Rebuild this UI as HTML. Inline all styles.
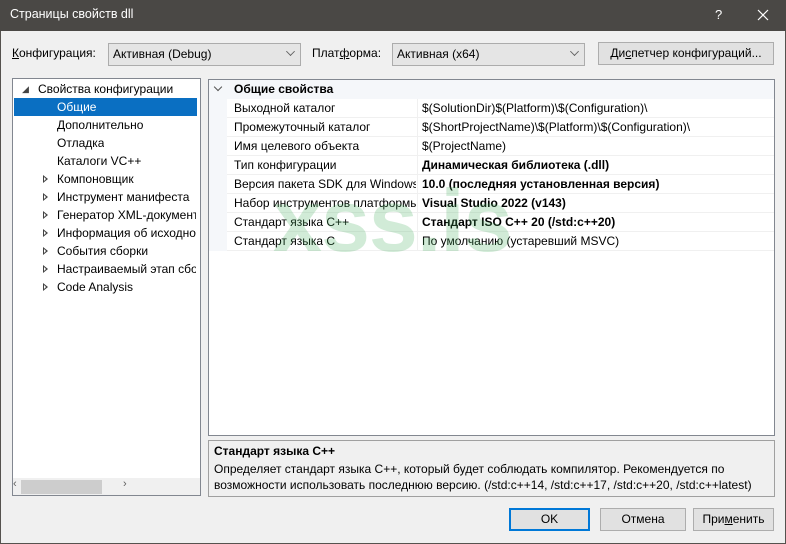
<!DOCTYPE html>
<html><head><meta charset="utf-8"><style>
*{margin:0;padding:0;box-sizing:border-box}
body{width:786px;height:544px;background:#f0f0f0;font-family:"Segoe UI","Liberation Sans","DejaVu Sans",sans-serif;font-size:12px;color:#000;position:relative;overflow:hidden}
.abs{position:absolute}
.win{position:absolute;left:0;top:0;width:786px;height:544px;border:1px solid #55524e;border-top:none}
.title{left:0;top:0;width:786px;height:31px;background:#4a4845;color:#fff;font-size:12.5px}
.combo{background:#e5e5e5;border:1px solid #acacac;height:23px;line-height:21px;padding-left:4px}
.btn{background:#e1e1e1;border:1px solid #adadad;height:23px;line-height:21px;text-align:center}
.chev{position:absolute;right:6px;width:7px;height:7px;border-right:1px solid #606060;border-bottom:1px solid #606060;transform:rotate(45deg) scale(.9);top:4px}
.tree{left:12px;top:78px;width:189px;height:418px;background:#fff;border:1px solid #828790}
.ti{position:absolute;height:18px;line-height:18px;white-space:nowrap;overflow:hidden}
.tri{position:absolute;width:0;height:0;border-top:4px solid transparent;border-bottom:4px solid transparent;border-left:5px solid #444}
.tri:after{content:"";position:absolute;left:-4px;top:-2px;border-top:2px solid transparent;border-bottom:2px solid transparent;border-left:2.5px solid #fff}
.grid{left:208px;top:79px;width:567px;height:357px;background:#fff;border:1px solid #828790}
.row{position:absolute;left:18px;width:547px;height:19px;line-height:18px;border-bottom:1px solid #f0f0f0}
.row .n{position:absolute;left:7px;width:182px;overflow:hidden;white-space:nowrap}
.row .v{position:absolute;left:190px;border-left:1px solid #f0f0f0;padding-left:4px;height:19px;width:357px;top:0;white-space:nowrap}
.b{font-weight:bold}
</style></head><body>
<div class="abs title"><span class="abs" style="left:10px;top:7px">Страницы свойств dll</span><span class="abs" style="left:715px;top:7px;font-size:13px">?</span>
<svg class="abs" style="left:757px;top:9px" width="12" height="12"><path d="M1 1L11 11M11 1L1 11" stroke="#fff" stroke-width="1.2"/></svg></div>
<div class="win" style="top:31px;height:513px"></div>

<span class="abs" style="left:12px;top:46px"><u>К</u>онфигурация:</span>
<div class="abs combo" style="left:108px;top:43px;width:193px">Активная (Debug)<span class="chev"></span></div>
<span class="abs" style="left:312px;top:46px">Плат<u>ф</u>орма:</span>
<div class="abs combo" style="left:392px;top:43px;width:193px">Активная (x64)<span class="chev"></span></div>
<div class="abs btn" style="left:598px;top:42px;width:176px">Ди<u>с</u>петчер конфигураций...</div>

<div class="abs tree">
 <div class="ti" style="left:9px;top:1px;font-size:9px;color:#444">◢</div>
 <div class="ti" style="left:25px;top:1px">Свойства конфигурации</div>
 <div class="ti" style="left:1px;top:19px;width:183px;background:#0a6fc2;color:#fff;padding-left:43px">Общие</div>
 <div class="ti" style="left:44px;top:37px">Дополнительно</div>
 <div class="ti" style="left:44px;top:55px">Отладка</div>
 <div class="ti" style="left:44px;top:73px">Каталоги VC++</div>
 <div class="ti" style="left:44px;top:91px;width:139px">Компоновщик</div>
 <div class="ti" style="left:44px;top:109px;width:139px">Инструмент манифеста</div>
 <div class="ti" style="left:44px;top:127px;width:139px">Генератор XML-документов</div>
 <div class="ti" style="left:44px;top:145px;width:139px">Информация об исходном коде</div>
 <div class="ti" style="left:44px;top:163px;width:139px">События сборки</div>
 <div class="ti" style="left:44px;top:181px;width:139px">Настраиваемый этап сборки</div>
 <div class="ti" style="left:44px;top:199px;width:139px">Code Analysis</div>
 <span class="tri" style="left:30px;top:96px"></span>
 <span class="tri" style="left:30px;top:114px"></span>
 <span class="tri" style="left:30px;top:132px"></span>
 <span class="tri" style="left:30px;top:150px"></span>
 <span class="tri" style="left:30px;top:168px"></span>
 <span class="tri" style="left:30px;top:186px"></span>
 <span class="tri" style="left:30px;top:204px"></span>
 <div class="abs" style="left:0;top:399px;width:187px;height:17px;background:#f0f0f0"></div>
 <div class="abs" style="left:8px;top:401px;width:81px;height:14px;background:#cdcdcd"></div>
 <span class="abs" style="left:0px;top:399px;color:#606060;font-size:11px">‹</span>
 <span class="abs" style="left:110px;top:399px;color:#606060;font-size:11px">›</span>
</div>

<div class="abs grid">
 <div class="abs" style="left:0;top:0;width:18px;height:171px;background:#f5f7fa"></div>
 <div class="abs b" style="left:0;top:0;width:565px;height:19px;background:#f5f7fa;line-height:19px;padding-left:25px">Общие свойства</div>
 <span class="abs" style="left:6px;top:4px;width:6px;height:6px;border-right:1px solid #555;border-bottom:1px solid #555;transform:rotate(45deg)"></span>
 <div class="row" style="top:19px"><span class="n">Выходной каталог</span><span class="v">$(SolutionDir)$(Platform)\$(Configuration)\</span></div>
 <div class="row" style="top:38px"><span class="n">Промежуточный каталог</span><span class="v">$(ShortProjectName)\$(Platform)\$(Configuration)\</span></div>
 <div class="row" style="top:57px"><span class="n">Имя целевого объекта</span><span class="v">$(ProjectName)</span></div>
 <div class="row" style="top:76px"><span class="n">Тип конфигурации</span><span class="v b">Динамическая библиотека (.dll)</span></div>
 <div class="row" style="top:95px"><span class="n">Версия пакета SDK для Windows</span><span class="v b">10.0 (последняя установленная версия)</span></div>
 <div class="row" style="top:114px"><span class="n">Набор инструментов платформы</span><span class="v b">Visual Studio 2022 (v143)</span></div>
 <div class="row" style="top:133px"><span class="n">Стандарт языка C++</span><span class="v b">Стандарт ISO C++ 20 (/std:c++20)</span></div>
 <div class="row" style="top:152px"><span class="n">Стандарт языка C</span><span class="v">По умолчанию (устаревший MSVC)</span></div>
 <div class="abs" style="left:64px;top:90px;font:bold 88px 'Liberation Sans',sans-serif;color:rgba(70,175,95,0.25);letter-spacing:-1px">xss.is</div>
</div>

<div class="abs" style="left:208px;top:440px;width:567px;height:57px;border:1px solid #a0a0a0;background:#f0f0f0">
 <div class="abs b" style="left:5px;top:3px">Стандарт языка C++</div>
 <div class="abs" style="left:5px;top:20px;line-height:16px;width:555px">Определяет стандарт языка C++, который будет соблюдать компилятор. Рекомендуется по возможности использовать последнюю версию. (/std:c++14, /std:c++17, /std:c++20, /std:c++latest)</div>
</div>

<div class="abs btn" style="left:509px;top:508px;width:81px;border:2px solid #0078d7;line-height:19px">OK</div>
<div class="abs btn" style="left:600px;top:508px;width:86px">Отмена</div>
<div class="abs btn" style="left:693px;top:508px;width:81px">При<u>м</u>енить</div>
</body></html>
